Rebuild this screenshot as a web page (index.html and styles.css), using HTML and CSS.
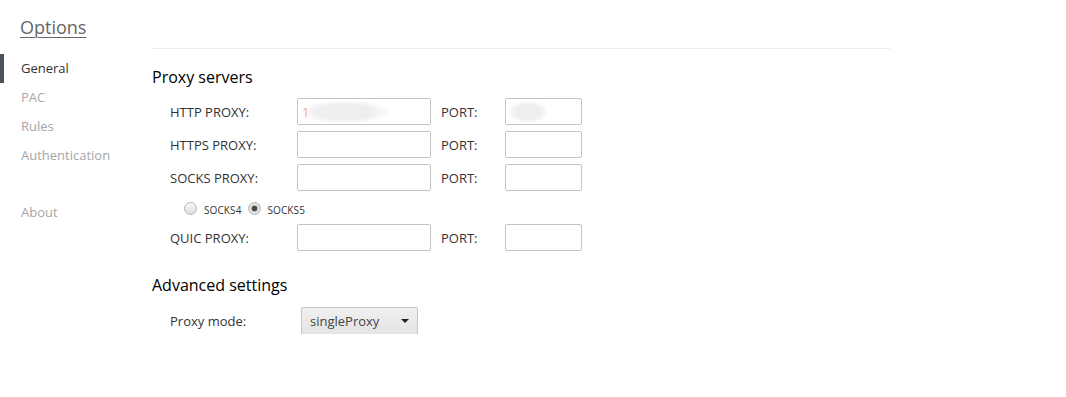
FILE: index.html
```html
<!DOCTYPE html>
<html lang="en">

<head>
    <meta charset="UTF-8">
    <meta name="viewport" content="width=device-width, initial-scale=1.0">
    <title>Options</title>
    <link rel="stylesheet" href="styles.css">
</head>

<body>
    <div class="page">
        <!-- 左侧菜单 -->
        <div class="sidebar">
            <h1 class="title">Options</h1>
            <ul class="nav">
                <li class="active">General</li>
                <li>PAC</li>
                <li>Rules</li>
                <li>Authentication</li>
                <li class="about">About</li>
            </ul>
        </div>
        <!-- 主体 -->
        <div class="main">
            <h2>Proxy servers</h2>
            <div class="rows">
                <div class="row">
                    <span class="label">HTTP PROXY:</span>
                    <input class="host hidden-value" type="text" value="1">
                    <span class="port-label">PORT:</span>
                    <input class="port hidden-port" type="text">
                </div>
                <div class="row">
                    <span class="label">HTTPS PROXY:</span>
                    <input class="host" type="text">
                    <span class="port-label">PORT:</span>
                    <input class="port" type="text">
                </div>
                <div class="row">
                    <span class="label">SOCKS PROXY:</span>
                    <input class="host" type="text">
                    <span class="port-label">PORT:</span>
                    <input class="port" type="text">
                </div>
                <div class="radios">
                    <label><input type="radio" name="socks"><span>socks4</span></label>
                    <label><input type="radio" name="socks" checked><span>socks5</span></label>
                </div>
                <div class="row">
                    <span class="label">QUIC PROXY:</span>
                    <input class="host" type="text">
                    <span class="port-label">PORT:</span>
                    <input class="port" type="text">
                </div>
            </div>

            <h2 class="advanced">Advanced settings</h2>
            <div class="row mode">
                <span class="label">Proxy mode:</span>
                <div class="select">
                    <span>singleProxy</span>
                    <i></i>
                </div>
            </div>
        </div>
    </div>
</body>

</html>
```

FILE: styles.css
```css
* {
    padding: 0;
    margin: 0;
    box-sizing: border-box;
}

ul {
    list-style: none;
}

body {
    font-family: "Segoe UI", "Open Sans", "Noto Sans", sans-serif;
    font-size: 13px;
    color: #333;
    background-color: #fff;
}

.page {
    display: flex;
}

.sidebar {
    width: 152px;
    padding-top: 14px;
}

.title {
    font-size: 18px;
    font-weight: normal;
    color: #666;
    text-decoration: underline;
    text-underline-offset: 3px;
    text-decoration-thickness: 1px;
    padding-left: 20px;
    line-height: 26px;
    height: 40px;
}

.nav li {
    height: 29px;
    line-height: 29px;
    padding-left: 17px;
    color: #a6a6a6;
    border-left: 4px solid transparent;
}

.nav li.active {
    color: #333;
    border-left-color: #4b525b;
}

.nav li.about {
    margin-top: 28px;
}

.main {
    width: 738px;
    margin-top: 48px;
    border-top: 1px solid #ececec;
}

.main h2 {
    font-size: 16px;
    font-weight: normal;
    color: #000;
    line-height: 22px;
    margin-top: 17px;
    margin-bottom: 10px;
}

.main h2.advanced {
    margin-top: 23px;
    margin-bottom: 11px;
}

.rows {
    display: flex;
    flex-direction: column;
    gap: 6px;
}

.row {
    display: flex;
    align-items: center;
    height: 27px;
    padding-left: 18px;
}

.label {
    width: 127px;
    color: #333;
}

.host {
    width: 134px;
    height: 27px;
    border: 1px solid #c4c4c4;
    border-radius: 2px;
    outline: none;
    padding-left: 6px;
    font-family: inherit;
    font-size: 13px;
}

.port-label {
    margin-left: 10px;
    width: 64px;
}

.port {
    width: 77px;
    height: 27px;
    border: 1px solid #c4c4c4;
    border-radius: 2px;
    outline: none;
}

.hidden-value {
    color: #f0b07a;
    padding-left: 4px;
    background-image: radial-gradient(ellipse 46px 12px at 47px 13px, #eeeeee 62%, rgba(238, 238, 238, 0) 100%);
    background-repeat: no-repeat;
}

.hidden-port {
    background-image: radial-gradient(ellipse 20px 12px at 22px 13px, #eeeeee 60%, rgba(238, 238, 238, 0) 100%);
    background-repeat: no-repeat;
}

.radios {
    display: flex;
    align-items: center;
    height: 26px;
    padding-left: 32px;
    margin: -2px 0 -3px;
}

.radios label {
    display: flex;
    align-items: center;
    margin-right: 6px;
}

.radios input {
    appearance: none;
    -webkit-appearance: none;
    width: 13px;
    height: 13px;
    margin: 0 7px 0 0;
    border: 1px solid #b4b4b4;
    border-radius: 50%;
    background: linear-gradient(#fafafa, #dcdcdc);
}

.radios input:checked {
    background: radial-gradient(circle, #4a4a4a 0, #4a4a4a 2.5px, #d8d8d8 3.2px, #f4f4f4 100%);
}

.radios span {
    color: #333;
    font-variant-caps: all-small-caps;
    font-size: 14px;
    letter-spacing: 0.1px;
}

.mode .label {
    width: 131px;
}

.select {
    width: 117px;
    height: 28px;
    border: 1px solid #c6c6c6;
    border-radius: 2px;
    background: linear-gradient(#f0f0f0, #e4e4e4);
    display: flex;
    align-items: center;
    justify-content: space-between;
    padding: 0 8px 0 8px;
    color: #444;
}

.select i {
    width: 0;
    height: 0;
    border-left: 4px solid transparent;
    border-right: 4px solid transparent;
    border-top: 4px solid #222;
}
```
